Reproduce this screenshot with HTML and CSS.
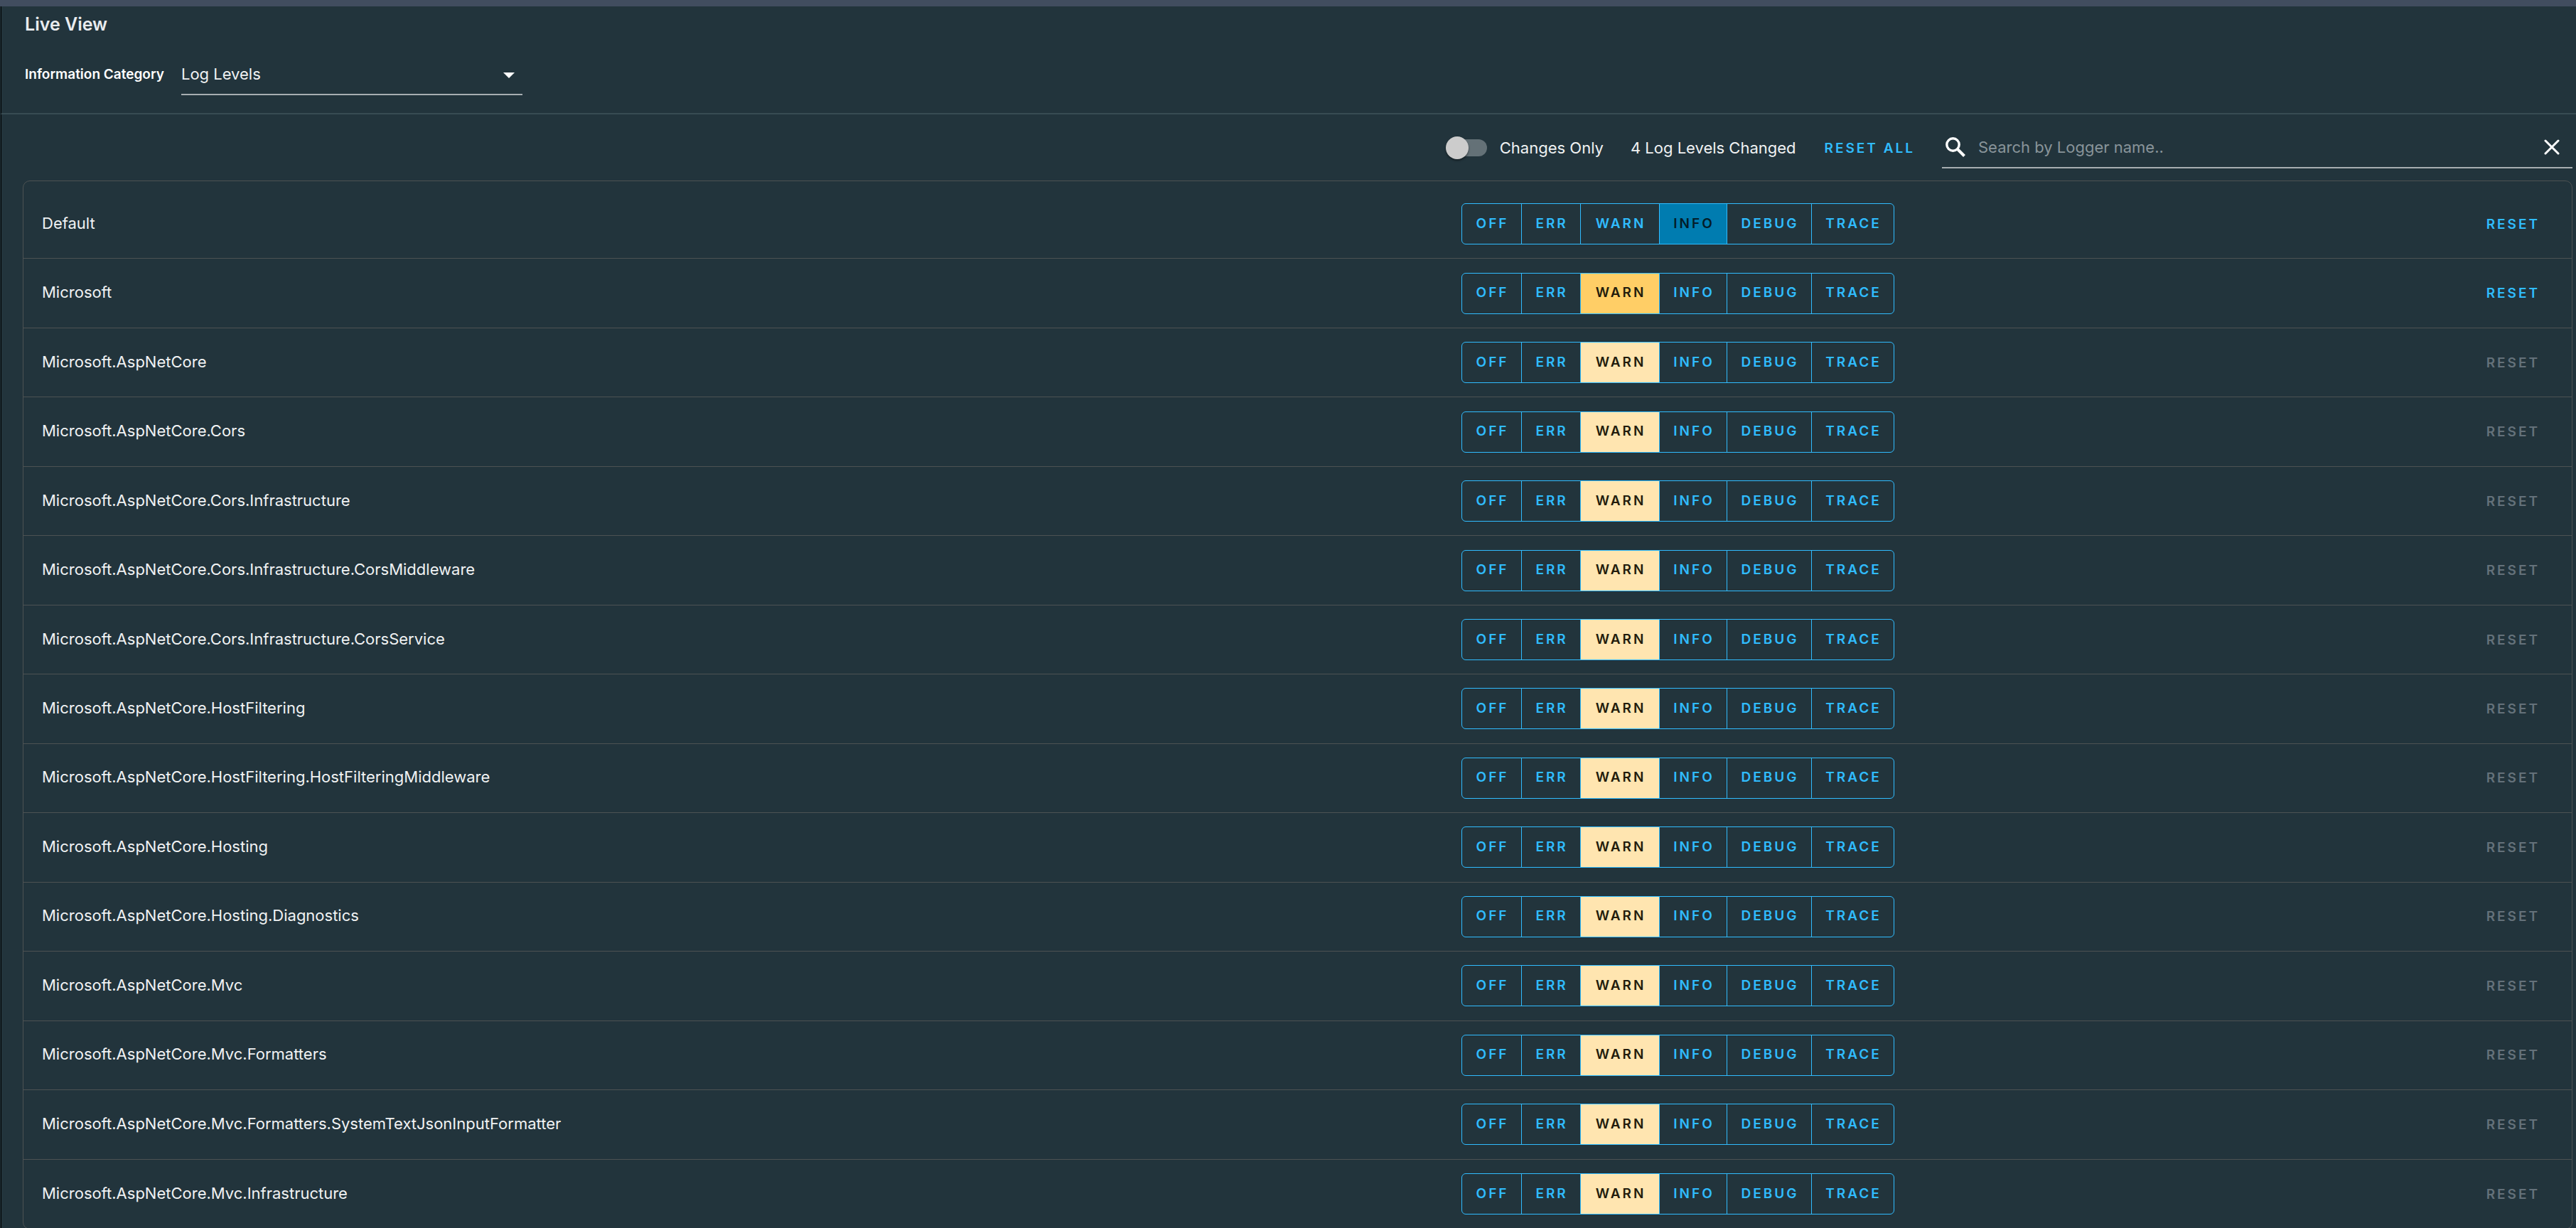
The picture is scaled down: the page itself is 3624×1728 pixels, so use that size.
FILE: index.html
```html
<!DOCTYPE html>
<html lang="en">
<head>
<meta charset="utf-8">
<title>Live View</title>
<link rel="stylesheet" href="styles.css">
</head>
<body>
<div class="app">
  <header class="page-header">
    <h1 class="title">Live View</h1>
    <div class="category">
      <label class="category-label" for="category">Information Category</label>
      <div class="select-wrap">
        <select class="select" id="category"><option>Log Levels</option></select>
        <svg class="select-arrow" viewBox="0 0 16 8" aria-hidden="true"><path d="M0 0h16L8 8z" fill="currentColor"/></svg>
      </div>
    </div>
  </header>
  <main class="content">
    <div class="toolbar">
      <label class="toggle"><input class="toggle-input" type="checkbox"><span>Changes Only</span></label>
      <span class="changed">4 Log Levels Changed</span>
      <button class="text-button reset-all" type="button">RESET ALL</button>
      <div class="search">
        <svg class="search-icon" viewBox="0 0 28 28" aria-hidden="true"><circle cx="10.5" cy="10.5" r="8.7" fill="none" stroke="currentColor" stroke-width="3.4"/><path d="M16.5 16.5l10 10" stroke="currentColor" stroke-width="4"/></svg>
        <input class="search-input" type="text" aria-label="Search by Logger name" placeholder="Search by Logger name..">
        <button class="clear" type="button" aria-label="Clear"><svg class="clear-icon" viewBox="0 0 22 22" aria-hidden="true"><path d="M2 2l18 18M20 2L2 20" stroke="currentColor" stroke-width="3" stroke-linecap="round"/></svg></button>
      </div>
    </div>
    <ul class="loggers" id="loggers"></ul>
  </main>
</div>
<script src="app.js"></script>
</body>
</html>
```
FILE: app.js
```js
const levels = ["OFF", "ERR", "WARN", "INFO", "DEBUG", "TRACE"];
const loggers = [
  { name: "Default", level: "INFO", changed: true },
  { name: "Microsoft", level: "WARN", changed: true },
  { name: "Microsoft.AspNetCore" },
  { name: "Microsoft.AspNetCore.Cors" },
  { name: "Microsoft.AspNetCore.Cors.Infrastructure" },
  { name: "Microsoft.AspNetCore.Cors.Infrastructure.CorsMiddleware" },
  { name: "Microsoft.AspNetCore.Cors.Infrastructure.CorsService" },
  { name: "Microsoft.AspNetCore.HostFiltering" },
  { name: "Microsoft.AspNetCore.HostFiltering.HostFilteringMiddleware" },
  { name: "Microsoft.AspNetCore.Hosting" },
  { name: "Microsoft.AspNetCore.Hosting.Diagnostics" },
  { name: "Microsoft.AspNetCore.Mvc" },
  { name: "Microsoft.AspNetCore.Mvc.Formatters" },
  { name: "Microsoft.AspNetCore.Mvc.Formatters.SystemTextJsonInputFormatter" },
  { name: "Microsoft.AspNetCore.Mvc.Infrastructure" }
];

document.getElementById("loggers").innerHTML = loggers.map((logger) => {
  const current = logger.level || "WARN";
  const buttons = levels.map((level) => {
    const on = level === current;
    const cls = "level level-" + level.toLowerCase() + (on ? " selected" : "");
    return `<button class="${cls}" type="button" aria-pressed="${on}">${level}</button>`;
  }).join("");
  return `<li class="logger${logger.changed ? " changed-logger" : ""}">
    <span class="logger-name">${logger.name}</span>
    <div class="logger-actions">
      <div class="levels" role="group" aria-label="${logger.name}">${buttons}</div>
      <button class="text-button" type="button"${logger.changed ? "" : " disabled"}>RESET</button>
    </div>
  </li>`;
}).join("");
```
FILE: styles.css
```css
* { box-sizing: border-box; }

body {
  margin: 0;
  background: #22343c;
  color: #f0f2f3;
  font: 22px/32px Inter, sans-serif;
}

button, input, select {
  font: inherit;
  color: inherit;
  background: none;
  border: 0;
  padding: 0;
  margin: 0;
}

.app {
  display: flex;
  flex-direction: column;
  height: 100vh;
  overflow: hidden;
  border-top: 9px solid #414d5f;
}

.page-header {
  margin-left: 1px;
  padding: 9px 33px 25px;
  border-left: 1px solid #000;
  border-bottom: 2px solid #384c53;
}

.title {
  margin: 0;
  font-size: 25px;
  font-weight: 600;
  color: #e9ecef;
}

.category {
  display: flex;
  align-items: center;
  gap: 24px;
  margin-top: 26px;
}

.category-label {
  font-size: 19px;
  font-weight: 600;
  color: #fff;
}

.select-wrap {
  display: flex;
  align-items: center;
  width: 480px;
  height: 58px;
  padding-right: 11px;
  border-bottom: 2px solid #a7aeb1;
}

.select {
  flex: 1;
  appearance: none;
}

.select-arrow {
  width: 16px;
  height: 8px;
  margin-top: 4px;
  color: #fff;
}

.content {
  display: flex;
  flex: 1;
  flex-direction: column;
  margin-left: 1px;
  padding: 18px 5px 0 30px;
  border-left: 1px solid #000;
}

.toolbar {
  display: flex;
  align-items: center;
  justify-content: flex-end;
  height: 58px;
  margin-bottom: 17px;
}

.toggle {
  display: flex;
  align-items: center;
  gap: 18px;
}

.toggle-input {
  appearance: none;
  display: flex;
  align-items: center;
  width: 54px;
  height: 24px;
  border-radius: 12px;
  background: #647177;
}

.toggle-input::before {
  content: "";
  width: 32px;
  height: 32px;
  margin-left: -4px;
  border-radius: 50%;
  background: #ccc;
  box-shadow: 0 2px 3px rgba(0, 0, 0, .4);
}

.changed { margin-left: 38px; }

.text-button {
  padding-top: 1px;
  font-size: 19px;
  font-weight: 600;
  letter-spacing: 3px;
  color: #30bcff;
}

.text-button:disabled { color: #64717a; }

.reset-all { margin: 0 38px 0 40px; }

.search {
  display: flex;
  align-items: center;
  width: 887px;
  height: 58px;
  padding: 0 18px 0 5px;
  border-bottom: 2px solid #a7aeb1;
}

.search-icon {
  width: 28px;
  height: 28px;
  color: #fff;
}

.search-input {
  flex: 1;
  margin-left: 18px;
}

.search-input::placeholder { color: #89949a; }

.clear {
  display: flex;
  color: #fff;
}

.clear-icon {
  width: 22px;
  height: 22px;
}

.loggers {
  display: grid;
  flex: 1;
  grid-auto-rows: 1fr;
  margin: 0 0 -2px;
  padding: 12px 0 0;
  list-style: none;
  border: 1px solid #4d5253;
  border-radius: 10px;
}

.logger {
  display: grid;
  grid-template-columns: 25fr 19fr;
  align-items: center;
  padding: 0 45px 0 26px;
  border-bottom: 1px solid #4d5253;
}

.logger:last-child { border-bottom: 0; }

.logger-name { padding-bottom: 3px; }

.logger-actions {
  display: flex;
  align-items: center;
  justify-content: space-between;
}

.levels {
  display: flex;
  height: 58px;
  border: 1px solid #30bcff;
  border-radius: 6px;
  overflow: hidden;
}

.level {
  width: 83px;
  padding: 0 0 1px 3px;
  font-size: 19px;
  font-weight: 600;
  letter-spacing: 3px;
  color: #30bcff;
}

.level + .level { border-left: 1px solid #30bcff; }
.level-warn { width: 111px; }
.level-info { width: 95px; }
.level-debug { width: 119px; }
.level-trace { width: 116px; }

.selected { color: #221c0c; background: #ffe5b0; }
.changed-logger .selected { background: #ffce66; }
.changed-logger .level-info.selected { color: #031c28; background: #007cb0; }
```
